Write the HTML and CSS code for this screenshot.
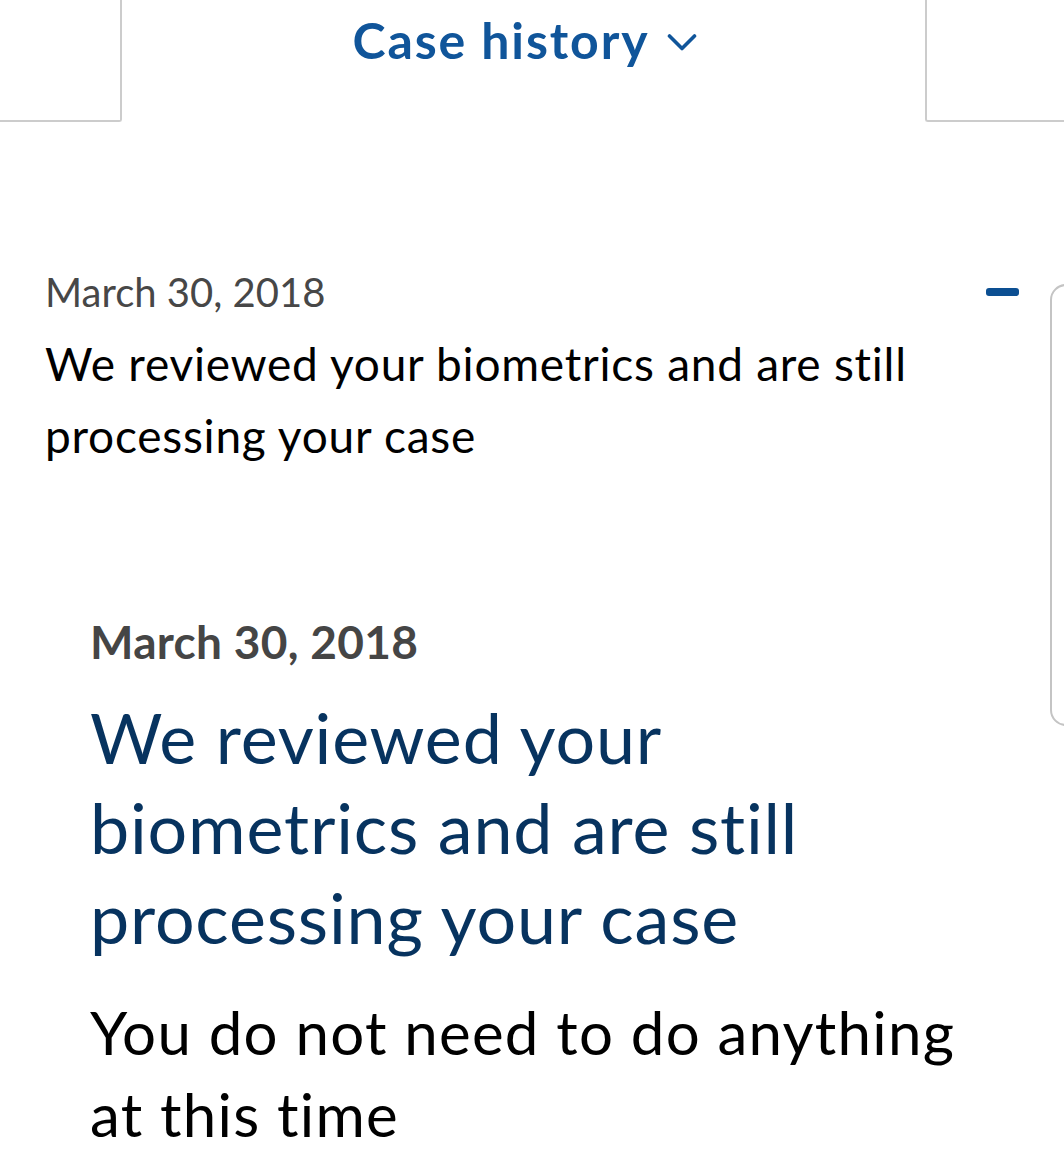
FILE: index.html
```html
<!DOCTYPE html>
<html lang="en">
<head>
<meta charset="utf-8">
<title>Case history</title>
<link rel="stylesheet" href="styles.css">
</head>
<body>
<nav class="tabs">
  <div class="tab tab-left"></div>
  <div class="tab tab-active">
    <span class="tab-label">Case history</span>
    <svg class="chevron" width="30" height="19" viewBox="0 0 30 19" aria-hidden="true">
      <polyline points="2.5,3 15,15.5 27.5,3" fill="none" stroke="#10559a" stroke-width="3.6" stroke-linecap="round" stroke-linejoin="round"/>
    </svg>
  </div>
  <div class="tab tab-right"></div>
</nav>

<main class="page">
  <section class="summary">
    <div class="summary-text">
      <div class="summary-date">March 30, 2018</div>
      <p class="summary-status">We reviewed your biometrics and are still processing your case</p>
    </div>
    <span class="collapse" aria-label="Collapse"></span>
  </section>

  <div class="peek-card" aria-hidden="true"></div>

  <article class="detail">
    <div class="detail-date">March 30, 2018</div>
    <h1 class="detail-title">We reviewed your biometrics and are still processing your case</h1>
    <p class="detail-body">You do not need to do anything at this time</p>
  </article>
</main>
</body>
</html>
```
FILE: styles.css
```css
html, body {
  margin: 0;
  padding: 0;
  background: #ffffff;
}
body {
  font-family: "Lato", "Open Sans", sans-serif;
  color: #000;
  width: 1064px;
  height: 1176px;
  overflow: hidden;
  position: relative;
}

/* Tabs */
.tabs {
  display: flex;
  height: 122px;
}
.tab {
  box-sizing: border-box;
  height: 122px;
}
.tab-left {
  width: 122px;
  border-right: 2px solid #cccccc;
  border-bottom: 2px solid #cccccc;
  border-bottom-right-radius: 3px;
}
.tab-active {
  width: 803px;
  display: flex;
  justify-content: center;
  align-items: flex-start;
  gap: 17px;
  padding-top: 10px;
  padding-left: 2px;
}
.tab-label {
  font-weight: 700;
  font-size: 50px;
  line-height: 60px;
  letter-spacing: 1.9px;
  color: #10559a;
}
.chevron {
  margin-top: 23px;
  flex: none;
}
.tab-right {
  flex: 1;
  border-left: 2px solid #cccccc;
  border-bottom: 2px solid #cccccc;
  border-bottom-left-radius: 3px;
}

/* Summary row */
.summary {
  display: flex;
  justify-content: space-between;
  align-items: flex-start;
  margin-top: 146px;
  padding: 0 45px;
}
.summary-text {
  max-width: 900px;
}
.summary-date {
  font-size: 40px;
  line-height: 48px;
  color: #474747;
}
.summary-status {
  margin: 12px 0 0;
  font-size: 46px;
  line-height: 72px;
  letter-spacing: 0.75px;
  color: #000;
}
.collapse {
  flex: none;
  width: 33px;
  height: 8px;
  margin-top: 20px;
  border-radius: 3px;
  background: #0c4f92;
}

/* Peeking next card at right edge */
.peek-card {
  position: absolute;
  left: 1050px;
  top: 284px;
  width: 60px;
  height: 442px;
  box-sizing: border-box;
  border: 2px solid #c4c4c4;
  border-radius: 16px;
}

/* Detail */
.detail {
  margin-top: 142px;
  padding-left: 90px;
}
.detail-date {
  font-weight: 700;
  font-size: 46px;
  line-height: 56px;
  letter-spacing: 0.3px;
  color: #454545;
}
.detail-title {
  margin: 22px 0 0;
  max-width: 820px;
  font-weight: 400;
  font-size: 70px;
  line-height: 90px;
  letter-spacing: 0.8px;
  color: #07335f;
}
.detail-body {
  margin: 29px 0 0;
  max-width: 900px;
  font-size: 60px;
  line-height: 82px;
  letter-spacing: 1.25px;
  color: #000;
}
```
